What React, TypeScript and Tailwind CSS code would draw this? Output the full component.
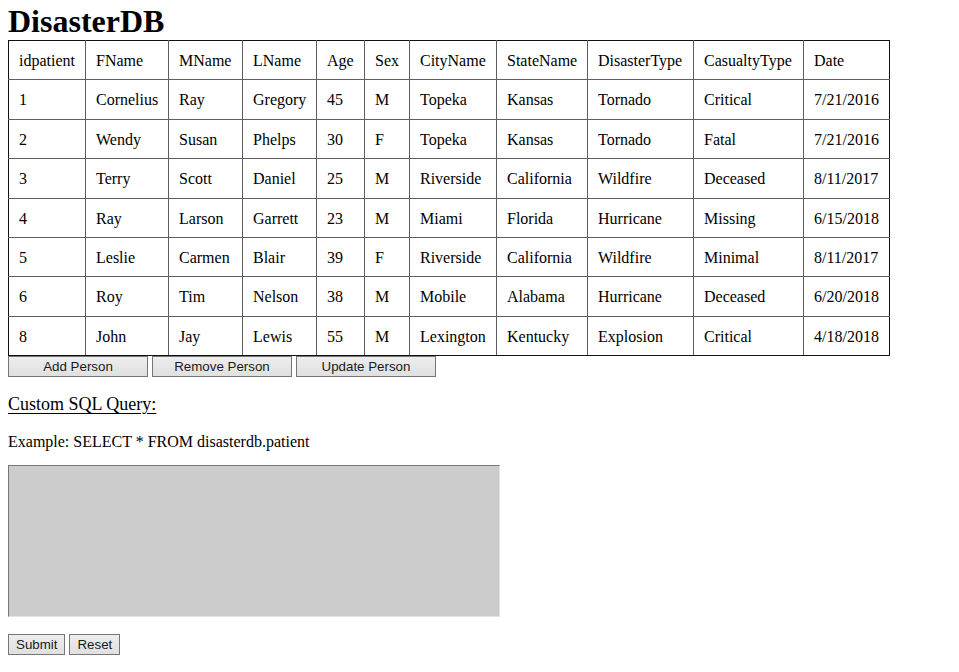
import React from "react";

const headers = ["idpatient", "FName", "MName", "LName", "Age", "Sex", "CityName", "StateName", "DisasterType", "CasualtyType", "Date"];
const widths = [77, 83, 74, 74, 48, 45, 87, 91, 106, 110, 86];
const rows = [
  ["1", "Cornelius", "Ray", "Gregory", "45", "M", "Topeka", "Kansas", "Tornado", "Critical", "7/21/2016"],
  ["2", "Wendy", "Susan", "Phelps", "30", "F", "Topeka", "Kansas", "Tornado", "Fatal", "7/21/2016"],
  ["3", "Terry", "Scott", "Daniel", "25", "M", "Riverside", "California", "Wildfire", "Deceased", "8/11/2017"],
  ["4", "Ray", "Larson", "Garrett", "23", "M", "Miami", "Florida", "Hurricane", "Missing", "6/15/2018"],
  ["5", "Leslie", "Carmen", "Blair", "39", "F", "Riverside", "California", "Wildfire", "Minimal", "8/11/2017"],
  ["6", "Roy", "Tim", "Nelson", "38", "M", "Mobile", "Alabama", "Hurricane", "Deceased", "6/20/2018"],
  ["8", "John", "Jay", "Lewis", "55", "M", "Lexington", "Kentucky", "Explosion", "Critical", "4/18/2018"],
];

const cell =
  "border border-[#5e5e5e] first:border-l-[#111] last:border-r-[#111] pl-[10px] pr-[6px] pt-[11px] pb-[9px] text-left font-normal align-middle whitespace-nowrap leading-[18.4px]";

const btn =
  "h-[21px] border border-[#767676] bg-gradient-to-b from-[#ededed] to-[#e0e0e0] text-[13.33px] leading-[normal] text-[#1a1a1a] font-['Arial','Liberation_Sans',sans-serif]";

export default function App() {
  return (
    <div className="px-[8px] text-black font-['Liberation_Serif','Times_New_Roman',serif]">
      <h1 className="h-[40px] pt-[2px] text-[32px] font-bold leading-[38px]">DisasterDB</h1>
      <table className="table-fixed border-collapse text-[16px]" style={{ width: 881 }}>
        <colgroup>
          {widths.map((w, i) => (
            <col key={i} style={{ width: w }} />
          ))}
        </colgroup>
        <thead>
          <tr>
            {headers.map((h) => (
              <th key={h} className={cell + " border-t-[#111]"}>
                {h}
              </th>
            ))}
          </tr>
        </thead>
        <tbody>
          {rows.map((r, ri) => (
            <tr key={ri}>
              {r.map((c, ci) => (
                <td key={ci} className={cell + (ri === rows.length - 1 ? " border-b-[#111]" : "")}>
                  {c}
                </td>
              ))}
            </tr>
          ))}
        </tbody>
      </table>
      <div className="flex gap-[4px]">
        <button className={btn + " w-[140px]"}>Add Person</button>
        <button className={btn + " w-[140px]"}>Remove Person</button>
        <button className={btn + " w-[140px]"}>Update Person</button>
      </div>
      <p className="mt-[17px] text-[18px] leading-[normal] underline underline-offset-[3px]">Custom SQL Query:</p>
      <p className="mt-[18px] text-[16px] leading-[normal]">Example: SELECT * FROM disasterdb.patient</p>
      <textarea
        className="mt-[14px] block h-[152px] w-[492px] resize-none border-[1.5px] border-t-[#777] border-l-[#777] border-b-[#e3e3e3] border-r-[#e3e3e3] bg-[#cccccc] outline-none"
        defaultValue=""
      />
      <div className="mt-[17px] flex gap-[4px]">
        <button className={btn + " px-[7px]"}>Submit</button>
        <button className={btn + " px-[7px]"}>Reset</button>
      </div>
    </div>
  );
}
